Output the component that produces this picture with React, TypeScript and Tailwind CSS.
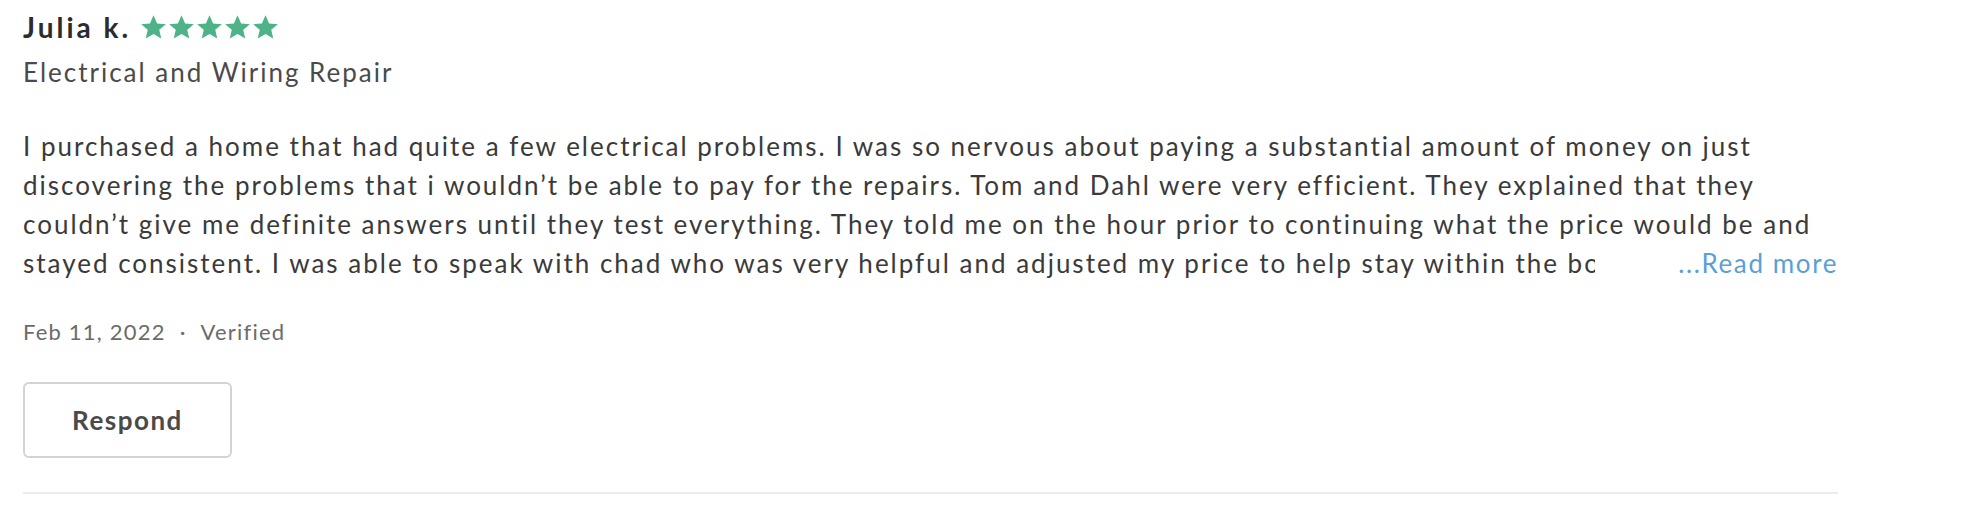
const lines = [
  "I purchased a home that had quite a few electrical problems. I was so nervous about paying a substantial amount of money on just",
  "discovering the problems that i wouldn’t be able to pay for the repairs. Tom and Dahl were very efficient. They explained that they",
  "couldn’t give me definite answers until they test everything. They told me on the hour prior to continuing what the price would be and",
];

function Stars() {
  return (
    <div className="flex items-center gap-[1px]">
      {[0, 1, 2, 3, 4].map((i) => (
        <svg key={i} viewBox="0 0 24 24" className="h-[27px] w-[27px]">
          <path
            d="M12 1.2l3.2 7.2 7.8.6-5.9 5.1 1.8 7.7L12 17.8l-6.9 4 1.8-7.7L1 9l7.8-.6z"
            fill="#4fb388"
          />
        </svg>
      ))}
    </div>
  );
}

export default function App() {
  return (
    <div className="w-[1966px] h-[518px] bg-white font-['Lato',sans-serif] text-[#3a3a3a] tracking-[1.2px] [font-variant-ligatures:none]">
      <div className="w-[1815px] ml-[23px] pt-[9px]">
        {/* Header */}
        <div className="flex items-center gap-[9px]">
          <h2 className="text-[28px] leading-[36px] font-bold text-[#2b2c2e] tracking-[3px]">Julia k.</h2>
          <Stars />
        </div>
        <p className="text-[26px] leading-[36px] text-[#4a4a4a] tracking-[2px] mt-[9px]">Electrical and Wiring Repair</p>

        {/* Review body */}
        <div className="mt-[37px] text-[26px] leading-[39px] tracking-[2px]">
          {lines.map((l) => (
            <div key={l} className="whitespace-nowrap">{l}</div>
          ))}
          <div className="flex items-center whitespace-nowrap">
            <div className="w-[1572px] overflow-hidden">
              stayed consistent. I was able to speak with chad who was very helpful and adjusted my price to help stay within the bo
            </div>
            <button className="ml-auto text-[#5a9fd6] tracking-[1.6px]">...Read more</button>
          </div>
        </div>

        {/* Meta */}
        <div className="mt-[34px] flex items-center text-[22px] leading-[30px] text-[#6b6b6b]">
          <span>Feb 11, 2022</span>
          <span className="mx-[14px]">·</span>
          <span>Verified</span>
        </div>

        <button className="mt-[35px] w-[209px] h-[76px] border-2 border-[#d3d3d3] rounded-[6px] text-[26px] font-bold text-[#4a4a4a] tracking-[1.5px]">
          Respond
        </button>

        <div className="mt-[34px] h-[2px] bg-[#ebebeb]" />
      </div>
    </div>
  );
}
